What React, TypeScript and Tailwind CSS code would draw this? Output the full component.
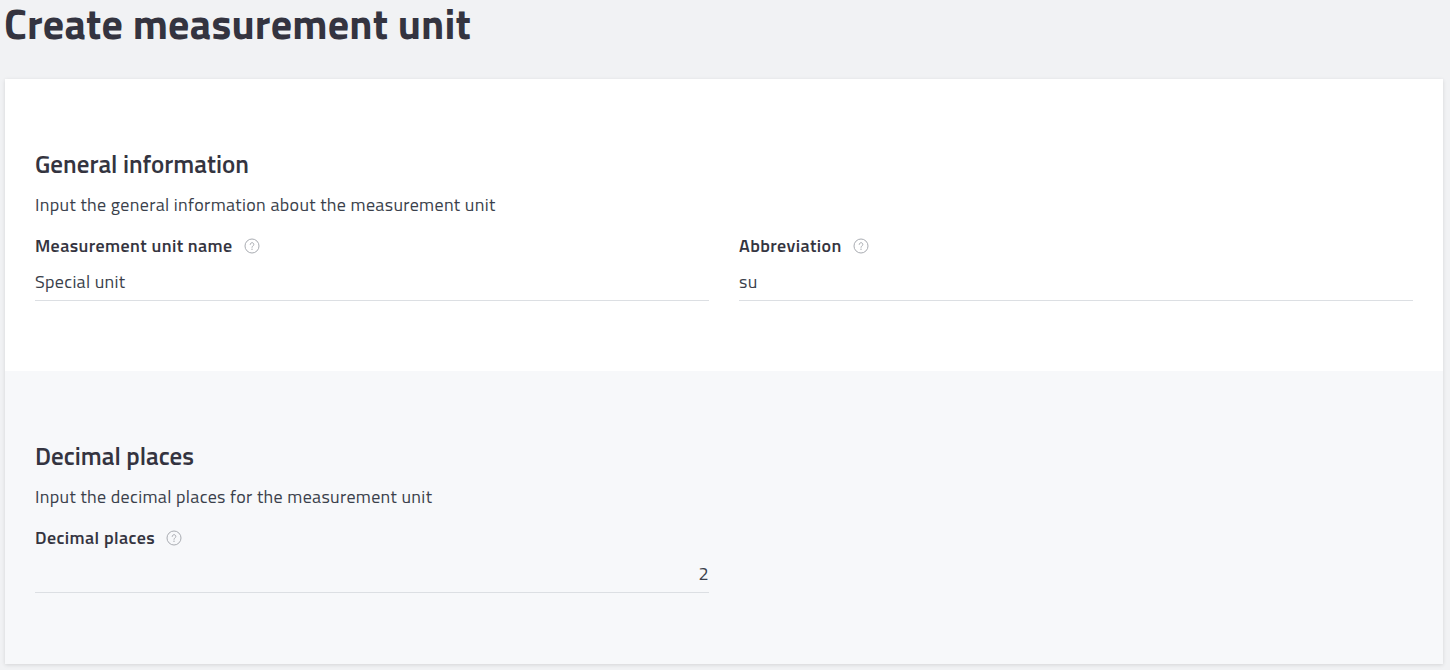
import { ReactNode } from "react";

function HelpIcon() {
  return (
    <svg width="16" height="16" viewBox="0 0 16 16" fill="none" className="ml-[11px] mt-[2px] shrink-0">
      <circle cx="8" cy="8" r="7" stroke="#a9acb2" strokeWidth="1" />
      <path d="M6.2 6.4a1.8 1.8 0 1 1 2.7 1.6c-.6.35-.9.7-.9 1.3" stroke="#a9acb2" strokeWidth="1" strokeLinecap="round" />
      <circle cx="8" cy="11.3" r=".7" fill="#a9acb2" />
    </svg>
  );
}

function Field({ label, value, right }: { label: string; value: string; right?: boolean }) {
  return (
    <div className="w-[674px]">
      <div className="flex h-[24px] items-center text-[18px] font-semibold tracking-[0.4px] text-[#343440]">
        {label}
        <HelpIcon />
      </div>
      <div
        className={`mt-[7px] h-[37px] border-b border-[#dcdfe3] pt-[6px] text-[18px] leading-[24px] tracking-[0.3px] text-[#3a3f4b] ${right ? "text-right" : ""}`}
      >
        {value}
      </div>
    </div>
  );
}

function Section({ title, text, children, className }: { title: string; text: string; children: ReactNode; className: string }) {
  return (
    <section className={`px-[30px] pt-[69px] ${className}`}>
      <h2 className="text-[25px] font-semibold leading-[32px] text-[#343440]">{title}</h2>
      <p className="mt-[13px] text-[18px] leading-[24px] tracking-[0.33px] text-[#3a3f4b]">{text}</p>
      <div className="mt-[16px] flex gap-[30px]">{children}</div>
    </section>
  );
}

export default function App() {
  return (
    <div className="h-[670px] overflow-hidden bg-[#f1f2f4] pl-[5px] font-['Titillium_Web','Open_Sans','Noto_Sans',sans-serif]">
      <h1 className="-ml-[1px] h-[79px] whitespace-nowrap text-[42px] font-bold leading-[47px] tracking-[0.2px] text-[#343440]">Create measurement unit</h1>
      <main className="h-[585px] w-[1438px] overflow-hidden bg-white shadow-[0_1px_4px_rgba(0,0,0,0.12)]">
        <Section title="General information" text="Input the general information about the measurement unit" className="h-[292px] bg-white">
          <Field label="Measurement unit name" value="Special unit" />
          <Field label="Abbreviation" value="su" />
        </Section>
        <Section title="Decimal places" text="Input the decimal places for the measurement unit" className="h-[293px] bg-[#f7f8fa]">
          <Field label="Decimal places" value="2" right />
        </Section>
      </main>
    </div>
  );
}
